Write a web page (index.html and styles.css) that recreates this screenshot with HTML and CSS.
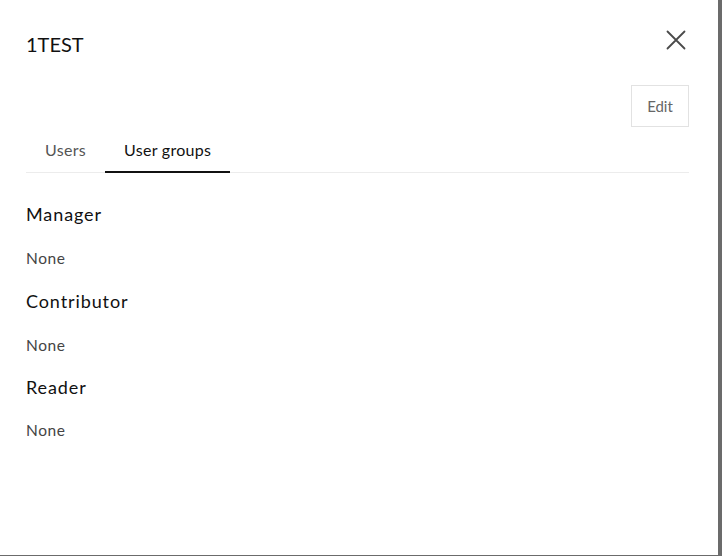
FILE: index.html
```html
<!DOCTYPE html>
<html lang="en">
<head>
<meta charset="utf-8">
<title>1TEST</title>
<link rel="stylesheet" href="styles.css">
</head>
<body>
<div class="panel">
  <div class="header">
    <h1 class="title">1TEST</h1>
    <button class="close" aria-label="Close">
      <svg width="24" height="24" viewBox="0 0 24 24"><path d="M3.5 3.5 L20.5 20.5 M20.5 3.5 L3.5 20.5" stroke="#4a4a4a" stroke-width="1.8" fill="none" stroke-linecap="round"/></svg>
    </button>
  </div>
  <div class="actions">
    <button class="edit">Edit</button>
  </div>
  <div class="tabs">
    <div class="tab">Users</div>
    <div class="tab active">User groups</div>
  </div>
  <div class="groups">
    <div class="group">
      <h2 class="group-name">Manager</h2>
      <p class="group-value">None</p>
    </div>
    <div class="group">
      <h2 class="group-name">Contributor</h2>
      <p class="group-value">None</p>
    </div>
    <div class="group">
      <h2 class="group-name">Reader</h2>
      <p class="group-value">None</p>
    </div>
  </div>
</div>
</body>
</html>
```
FILE: styles.css
```css
html, body {
  margin: 0;
  padding: 0;
  background: #6b6b6b;
}
body {
  width: 722px;
  height: 556px;
  font-family: Lato, "Noto Sans", sans-serif;
  color: #222;
}
.panel {
  width: 718px;
  height: 555px;
  background: #fff;
  box-sizing: border-box;
  padding: 32px 29px 0 26px;
  display: flex;
  flex-direction: column;
}
.header {
  display: flex;
  justify-content: space-between;
  align-items: flex-start;
}
.title {
  margin: 0;
  font-size: 20px;
  line-height: 24px;
  font-weight: 400;
  color: #111;
}
.close {
  border: 0;
  background: none;
  padding: 0;
  margin: -4px 1px 0 0;
  width: 24px;
  height: 24px;
  cursor: pointer;
}
.close svg { display: block; }
.actions {
  display: flex;
  justify-content: flex-end;
  margin-top: 29px;
}
.edit {
  font-family: inherit;
  font-size: 15px;
  color: #666;
  background: #fff;
  border: 1px solid #e2e2e2;
  width: 58px;
  height: 42px;
  padding: 0;
}
.tabs {
  display: flex;
  border-bottom: 1px solid #ececec;
}
.tab {
  padding: 13px 19px 11px 19px;
  font-size: 16px;
  line-height: 20px;
  letter-spacing: 0.3px;
  color: #555;
  border-bottom: 2px solid transparent;
  margin-bottom: -1px;
}
.tab.active {
  color: #111;
  border-bottom-color: #111;
}
.groups {
  padding-top: 29px;
  display: flex;
  flex-direction: column;
}
.group-name {
  margin: 0 0 22px;
  font-size: 18px;
  line-height: 24px;
  letter-spacing: 0.9px;
  font-weight: 400;
  color: #111;
}
.group-value {
  margin: 0 0 20px;
  font-size: 15.5px;
  line-height: 20px;
  letter-spacing: 0.6px;
  color: #444;
}
.group:nth-child(2) {
  padding-top: 1px;
}
.group:last-child .group-name {
  margin-bottom: 21px;
}
```
